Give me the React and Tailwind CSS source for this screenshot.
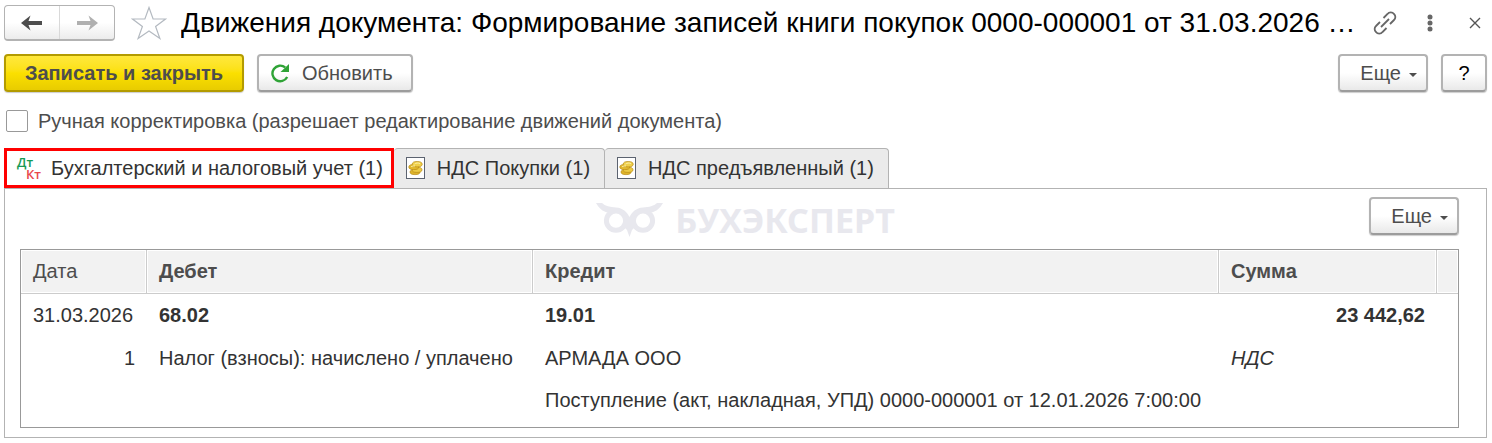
import { useState } from "react";

const columns = [
  { id: "date", title: "Дата", className: "w-[126px] border-r px-3 font-normal" },
  { id: "debit", title: "Дебет", className: "w-[386px] border-r px-3 font-bold" },
  { id: "credit", title: "Кредит", className: "border-r px-3 font-bold" },
  { id: "sum", title: "Сумма", className: "w-[218px] border-r px-3 font-bold" },
  { id: "extra", title: "", className: "w-[21px]" },
];

const tabs = [
  { id: "accounting", label: "Бухгалтерский и налоговый учет (1)", icon: "dtkt" },
  { id: "purchases", label: "НДС Покупки (1)", icon: "coins" },
  { id: "presented", label: "НДС предъявленный (1)", icon: "coins" },
];

const buttonClass =
  "flex h-[38px] items-center rounded border-2 border-[#b3b3b3] border-b-[#9c9c9c] bg-linear-to-b from-white from-50% to-[#e9e9e9] text-xl text-[#4d4d4d] shadow-[0_1px_1px_#cccccc]";

const BackIcon = () => (
  <svg viewBox="0 0 22 16" className="h-4 w-[22px]" fill="#4d4d4d" aria-hidden="true">
    <path d="M0 8 9.5 0.5 7.5 6H21v4H7.5L9.5 15.5Z" />
  </svg>
);

const ForwardIcon = () => (
  <svg viewBox="0 0 22 16" className="h-4 w-[22px]" fill="#b0b0b0" aria-hidden="true">
    <path d="M22 8 12.5 0.5 14.5 6H1v4H14.5L12.5 15.5Z" />
  </svg>
);

const StarIcon = () => (
  <svg viewBox="0 0 36 34" className="h-[34px] w-9" fill="none" stroke="#b4bac1" strokeWidth="1.2" aria-hidden="true">
    <path d="M18 1.5 22.1 13H34.5L24.6 20.4 28.9 32.5 18 25 7.1 32.5 11.4 20.4 1.5 13H13.9Z" />
  </svg>
);

const RefreshIcon = () => (
  <svg viewBox="0 0 20 20" className="h-5 w-5" aria-hidden="true">
    <path d="M17.2 14A7.8 7.8 0 1 1 15.2 4.4" fill="none" stroke="#2fa336" strokeWidth="2.4" />
    <path d="M19 1V9H10.5Z" fill="#2fa336" />
  </svg>
);

const LinkIcon = () => (
  <svg viewBox="0 0 24 24" className="h-6 w-6" fill="none" stroke="#666666" strokeWidth="1.8" aria-hidden="true">
    <path d="M10.5 7 14.5 3a4 4 0 0 1 6.5 0 4 4 0 0 1 0 6L17 13" />
    <path d="M13.5 17 9.5 21a4 4 0 0 1-6.5 0 4 4 0 0 1 0-6L7 11" />
    <path d="M8 16 16 8" />
  </svg>
);

const DtKtIcon = () => (
  <span className="flex w-[26px] shrink-0 flex-col pr-0.5 font-['Open_Sans',sans-serif] text-[13px] leading-3 font-semibold">
    <span className="self-start text-[#159a55]">Дт</span>
    <span className="self-end text-[#e8474c]">Кт</span>
  </span>
);

const CoinsIcon = () => (
  <svg viewBox="0 0 19 22" className="h-[22px] w-[19px] shrink-0" aria-hidden="true">
    <rect x="0.5" y="0.5" width="18" height="21" fill="#ffffff" stroke="#5c6370" />
    <g fill="#dfb42a" stroke="#b88a14" strokeWidth="0.7">
      <ellipse cx="9" cy="15" rx="5" ry="2.6" />
      <ellipse cx="11" cy="12.8" rx="5" ry="2.6" fill="#edcb45" />
      <ellipse cx="7.8" cy="10" rx="5" ry="2.6" fill="#e2b92f" />
      <ellipse cx="11.2" cy="7.2" rx="5" ry="2.7" fill="#f0d04a" />
    </g>
    <path d="M8.5 7C10 5.8 12.5 5.8 14 6.6M5 9.8C6 9 7.5 8.8 9 9" fill="none" stroke="#fbf0a8" />
  </svg>
);

const OwlLogo = () => (
  <svg viewBox="0 0 67 34" className="h-[34px] w-[67px]" aria-hidden="true">
    <g fill="none" stroke="#e8e8ee" strokeWidth="5">
      <circle cx="20" cy="17.7" r="9.6" />
      <circle cx="47" cy="17.7" r="9.6" />
    </g>
    <path
      d="M0 0H6C9 3 14 4 20 4.5 27 5 31 9 33.5 14 36 9 40 5 47 4.5 53 4 58 3 61 0H67C64 5 61 8 56 9.5L47 8.5 39 13 37 18 38 25 36 27 33.5 34 31 27 29 25 30 18 28 13 20 8.5 11 9.5C6 8 3 5 0 0Z"
      fill="#e8e8ee"
    />
  </svg>
);

const MoreButton = () => (
  <button type="button" className={`${buttonClass} w-[90px] justify-end gap-2 pr-[9px]`}>
    Еще
    <svg viewBox="0 0 8 4" className="mt-1 h-1 w-2" fill="#4d4d4d" aria-hidden="true">
      <path d="M0 0H8L4 4Z" />
    </svg>
  </button>
);

const App = () => {
  const [manual, setManual] = useState(false);
  const [activeTab, setActiveTab] = useState("accounting");

  return (
    <main className="bg-white pr-[5px] pb-1 pl-1 font-['Liberation_Sans',Arial,sans-serif] text-xl text-[#333333]">
      {/* Title bar */}
      <header className="flex items-center pt-[5px]">
        <div className="flex h-9 w-[111px] shrink-0 rounded border border-[#b3b3b3] border-b-2 bg-linear-to-b from-white from-50% to-[#ececec]">
          <button type="button" aria-label="Назад" className="flex flex-1 items-center justify-center border-r border-[#d9d9d9]">
            <BackIcon />
          </button>
          <button type="button" aria-label="Вперед" className="flex flex-1 items-center justify-center">
            <ForwardIcon />
          </button>
        </div>
        <button type="button" aria-label="Избранное" className="ml-4 shrink-0">
          <StarIcon />
        </button>
        <h1 className="ml-3.5 min-w-0 flex-1 truncate text-[28px] leading-9 text-black">
          Движения документа: Формирование записей книги покупок 0000-000001 от 31.03.2026 …
        </h1>
        <div className="flex shrink-0 items-center pr-1.5">
          <button type="button" aria-label="Ссылка" className="mr-[30px]">
            <LinkIcon />
          </button>
          <button type="button" aria-label="Меню" className="mr-9">
            <svg viewBox="0 0 6 18" className="h-[18px] w-1.5" fill="#666666" aria-hidden="true">
              <circle cx="3" cy="3" r="2.5" />
              <circle cx="3" cy="9" r="2.5" />
              <circle cx="3" cy="15" r="2.5" />
            </svg>
          </button>
          <button type="button" aria-label="Закрыть">
            <svg viewBox="0 0 12 12" className="h-3 w-3" stroke="#555555" strokeWidth="1.4" aria-hidden="true">
              <path d="M1 1 11 11M11 1 1 11" />
            </svg>
          </button>
        </div>
      </header>

      {/* Command bar */}
      <div className="mt-[13px] flex items-center">
        <button
          type="button"
          className="h-[38px] w-60 rounded border-2 border-[#b39b00] bg-linear-to-b from-[#ffe83b] via-[#fbe000] to-[#e8cc00] font-bold text-[#4d4d4d] shadow-[0_1px_1px_#cccccc]"
        >
          Записать и закрыть
        </button>
        <button type="button" className={`${buttonClass} ml-[13px] w-[156px] gap-3 pl-[11px]`}>
          <RefreshIcon />
          Обновить
        </button>
        <div className="ml-auto flex gap-[13px]">
          <MoreButton />
          <button type="button" className={`${buttonClass} w-[46px] justify-center`}>
            <span className="text-black">?</span>
          </button>
        </div>
      </div>

      <label className="mt-4 ml-0.5 flex w-fit items-center gap-2.5 leading-[26px] text-[#4d4d4d]">
        <input
          type="checkbox"
          checked={manual}
          onChange={(event) => setManual(event.target.checked)}
          className="h-[22px] w-[22px] appearance-none rounded-xs border border-[#999999] bg-white checked:bg-[#fbe000]"
        />
        Ручная корректировка (разрешает редактирование движений документа)
      </label>

      {/* Tabs */}
      <div role="tablist" className="mt-[14px] flex h-10">
        {tabs.map((tab) => (
          <button
            key={tab.id}
            type="button"
            role="tab"
            aria-selected={activeTab === tab.id}
            onClick={() => setActiveTab(tab.id)}
            className={
              activeTab === tab.id
                ? "flex items-center gap-2 border-3 border-[#ff0000] bg-white pr-2 pl-2.5"
                : "flex items-center gap-3 rounded-t-sm border border-b-0 border-l-0 border-[#b3b3b3] bg-[#ebebeb] pr-3.5 pb-px pl-3"
            }
          >
            {tab.icon === "dtkt" ? <DtKtIcon /> : <CoinsIcon />}
            {tab.label}
          </button>
        ))}
      </div>

      {/* Tab content */}
      <section role="tabpanel" className="border border-[#b3b3b3] pt-2 pr-[27px] pb-[9px] pl-[15px]">
        <div className="grid grid-cols-[1fr_auto_1fr] items-start">
          <div className="col-start-2 flex items-center gap-3 pt-[3px] pl-3 text-[34px] leading-10 font-bold text-[#e8e8ee]">
            <OwlLogo />
            <span className="font-['Noto_Sans',sans-serif]">БУХЭКСПЕРТ</span>
          </div>
          <div className="flex justify-end">
            <MoreButton />
          </div>
        </div>

        <div className="mt-[9px] border border-[#999999]">
          <table className="w-full table-fixed border-separate border-spacing-0 text-left">
            <thead>
              <tr className="h-11 text-[#4d4d4d]">
                {columns.map((column) => (
                  <th
                    key={column.id}
                    className={`border-b border-[#cccccc] bg-[#f2f2f2] pb-0.5 shadow-[inset_0_0_0_1px_#ffffff] ${column.className}`}
                  >
                    {column.title}
                  </th>
                ))}
              </tr>
            </thead>
            <tbody>
              <tr className="h-[43px] font-bold">
                <td className="px-3 pb-0.5 font-normal">31.03.2026</td>
                <td className="px-3 pb-0.5">68.02</td>
                <td className="px-3 pb-0.5">19.01</td>
                <td className="px-3 pb-0.5 text-right">23 442,62</td>
                <td />
              </tr>
              <tr className="h-[43px]">
                <td className="px-3 pb-0.5 text-right">1</td>
                <td className="px-3 pb-0.5">Налог (взносы): начислено / уплачено</td>
                <td className="px-3 pb-0.5">АРМАДА ООО</td>
                <td className="px-3 pb-0.5 italic">НДС</td>
                <td />
              </tr>
              <tr className="h-[47px] align-top">
                <td />
                <td />
                <td className="px-3 pt-1.5">Поступление (акт, накладная, УПД) 0000-000001 от 12.01.2026 7:00:00</td>
                <td />
                <td />
              </tr>
            </tbody>
          </table>
        </div>
      </section>
    </main>
  );
};

export default App;
